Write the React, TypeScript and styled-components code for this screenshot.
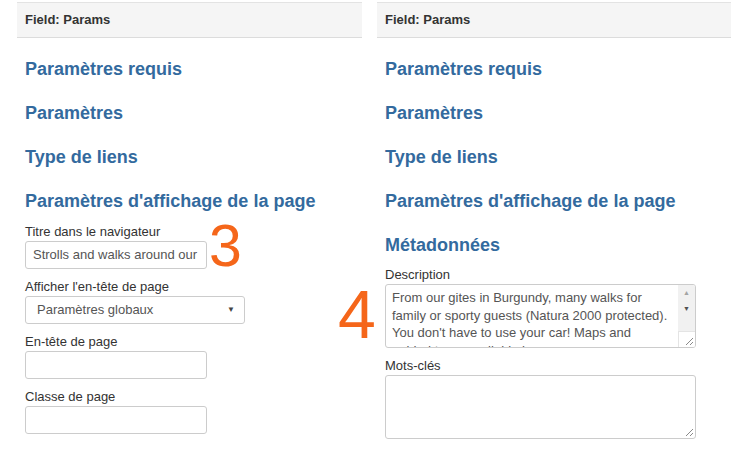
import React from 'react';
import styled, {createGlobalStyle} from 'styled-components';

const GlobalStyle = createGlobalStyle`
  body { margin: 0; background: #fff; font-family: "Liberation Sans", Arial, sans-serif; }
`;

const Page = styled.div`display: flex; gap: 15px; padding: 2px 0 0 17px; width: 731px; box-sizing: border-box;`;
const Panel = styled.div<{ $width: number }>`position: relative; width: ${p => p.$width}px;`;
const PanelHeader = styled.div`
   height: 34px; line-height: 34px; padding-left: 8px;
   background: #f5f5f5; border-top: 1px solid #e3e3e3; border-bottom: 1px solid #dcdcdc;
   font-size: 13px; font-weight: bold; color: #333;`;
const PanelBody = styled.div`padding: 21px 0 0 8px;`;
const Heading = styled.div<{ $gap?: number }>`
   font-size: 18px; font-weight: bold; line-height: 20px; color: #336a9e;
   margin-bottom: ${p => p.$gap ?? 24}px;`;
const Label = styled.div`font-size: 13px; line-height: 18px; color: #333; margin-top: 9px;
   &:first-of-type {margin-top: 0;}`;
const Input = styled.div<{ $width: number }>`
   width: ${p => p.$width}px; height: 28px; box-sizing: border-box;
   border: 1px solid #ccc; border-radius: 3px; padding: 0 7px;
   font-size: 13px; line-height: 26px; color: #555; white-space: nowrap; overflow: hidden;`;
const Select = styled(Input)`display: flex; justify-content: space-between; align-items: center; padding: 0 9px 0 11px;`;
const Caret = styled.span`font-size: 8px; color: #444;`;
const TextBox = styled.div<{ $height: number }>`
   display: flex; width: 311px; height: ${p => p.$height}px; box-sizing: border-box;
   border: 1px solid #ccc; border-radius: 3px; overflow: hidden; position: relative;`;
const TextContent = styled.div`flex: 1; padding: 4px 6px; font-size: 13px; line-height: 17.5px; color: #555;`;
const ScrollBar = styled.div`width: 17px; display: flex; flex-direction: column; background: #f1f1f1;`;
const ScrollArrow = styled.div`height: 14px; display: flex; align-items: center; justify-content: center; font-size: 7px; color: #a3a3a3;`;
const ScrollDown = styled(ScrollArrow)`color: #505050; margin-top: 2px;`;
const Spacer = styled.div`flex: 1;`;
const Grip = styled.svg`display: block; position: absolute; right: 1px; bottom: 1px;`;
const GripCorner = styled.div`height: 15px; background: #fff; border-left: 1px solid #e4e4e4; border-top: 1px solid #e4e4e4;`;
const Marker = styled.div<{ $size: number }>`
   position: absolute; font-size: ${p => p.$size}px; line-height: 1; color: #f5661a; font-family: "Liberation Sans", Arial, sans-serif;`;

const ResizeGrip = () => (
    <Grip width="9" height="9" viewBox="0 0 9 9">
        <path d="M8 1 L1 8 M8 5 L5 8" stroke="#8a8a8a" strokeWidth="1"/>
    </Grip>
);

export default function App() {
    return (
        <Page>
            <GlobalStyle/>
            <Panel $width={345}>
                <PanelHeader>Field: Params</PanelHeader>
                <PanelBody>
                    <Heading>Paramètres requis</Heading>
                    <Heading>Paramètres</Heading>
                    <Heading>Type de liens</Heading>
                    <Heading $gap={12}>Paramètres d'affichage de la page</Heading>
                    <Label>Titre dans le navigateur</Label>
                    <Input $width={182}>Strolls and walks around our</Input>
                    <Label>Afficher l'en-tête de page</Label>
                    <Select $width={220}>Paramètres globaux<Caret>▼</Caret></Select>
                    <Label>En-tête de page</Label>
                    <Input $width={182}/>
                    <Label>Classe de page</Label>
                    <Input $width={182}/>
                </PanelBody>
                <Marker $size={59} style={{left: 192, top: 215}}>3</Marker>
            </Panel>
            <Panel $width={354}>
                <PanelHeader>Field: Params</PanelHeader>
                <PanelBody>
                    <Heading>Paramètres requis</Heading>
                    <Heading>Paramètres</Heading>
                    <Heading>Type de liens</Heading>
                    <Heading>Paramètres d'affichage de la page</Heading>
                    <Heading $gap={11}>Métadonnées</Heading>
                    <Label>Description</Label>
                    <TextBox $height={64}>
                        <TextContent>
                            From our gites in Burgundy, many walks for<br/>
                            family or sporty guests (Natura 2000 protected).<br/>
                            You don't have to use your car! Maps and<br/>
                            guided tours available here.
                        </TextContent>
                        <ScrollBar>
                            <ScrollArrow>▲</ScrollArrow>
                            <ScrollDown>▼</ScrollDown>
                            <Spacer/>
                            <GripCorner/>
                        </ScrollBar>
                        <ResizeGrip/>
                    </TextBox>
                    <Label>Mots-clés</Label>
                    <TextBox $height={64}>
                        <TextContent/>
                        <ResizeGrip/>
                    </TextBox>
                </PanelBody>
                <Marker $size={68} style={{left: -39, top: 278}}>4</Marker>
            </Panel>
        </Page>
    );
}
